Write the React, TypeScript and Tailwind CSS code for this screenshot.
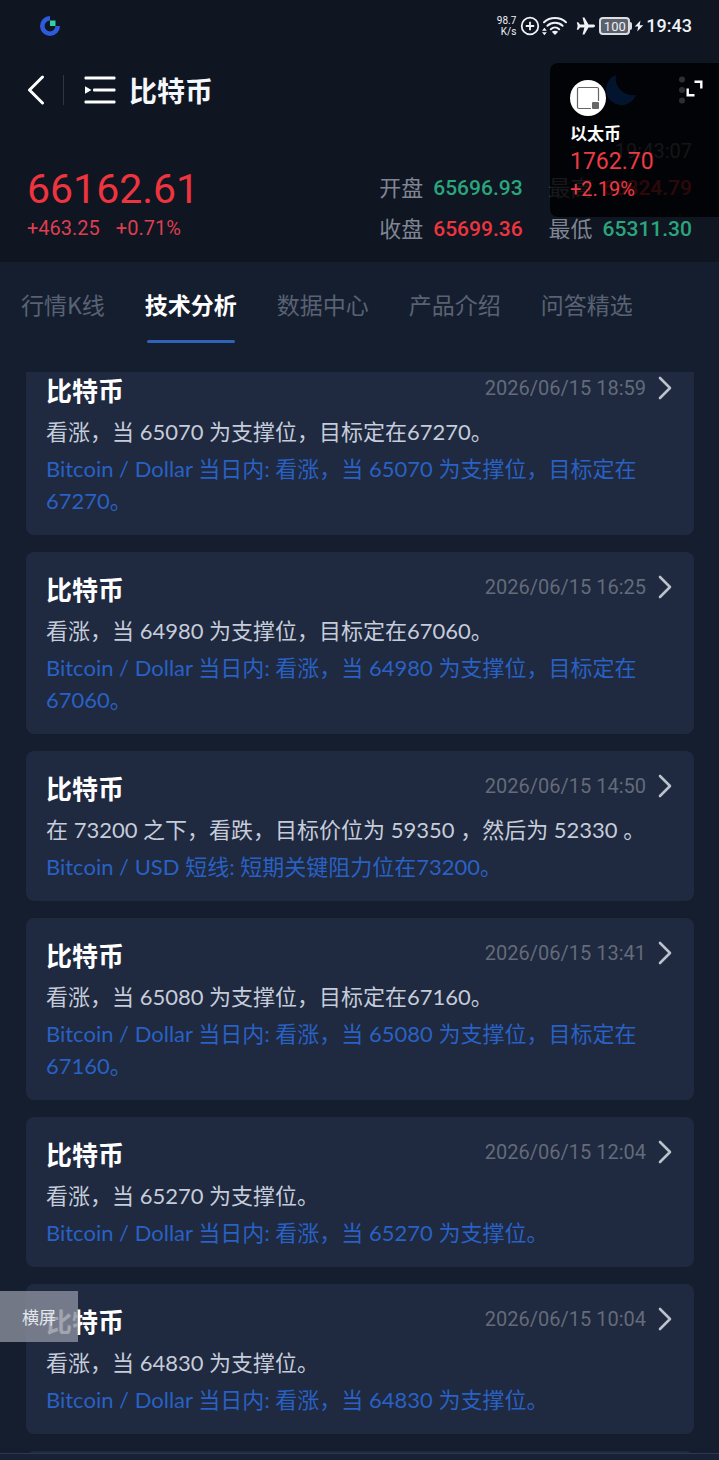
import { Fragment } from "react";

type Signal = {
    time: string;
    summary: string;
    detail: string;
};

const TABS = ["行情K线", "技术分析", "数据中心", "产品介绍", "问答精选"];
const ACTIVE_TAB = "技术分析";

const SIGNALS: Signal[] = [
    {
        time: "2026/06/15 18:59",
        summary: "看涨，当 65070 为支撑位，目标定在67270。",
        detail: "Bitcoin / Dollar 当日内: 看涨，当 65070 为支撑位，目标定在67270。",
    },
    {
        time: "2026/06/15 16:25",
        summary: "看涨，当 64980 为支撑位，目标定在67060。",
        detail: "Bitcoin / Dollar 当日内: 看涨，当 64980 为支撑位，目标定在67060。",
    },
    {
        time: "2026/06/15 14:50",
        summary: "在 73200 之下，看跌，目标价位为 59350 ，然后为 52330 。",
        detail: "Bitcoin / USD 短线: 短期关键阻力位在73200。",
    },
    {
        time: "2026/06/15 13:41",
        summary: "看涨，当 65080 为支撑位，目标定在67160。",
        detail: "Bitcoin / Dollar 当日内: 看涨，当 65080 为支撑位，目标定在67160。",
    },
    {
        time: "2026/06/15 12:04",
        summary: "看涨，当 65270 为支撑位。",
        detail: "Bitcoin / Dollar 当日内: 看涨，当 65270 为支撑位。",
    },
    {
        time: "2026/06/15 10:04",
        summary: "看涨，当 64830 为支撑位。",
        detail: "Bitcoin / Dollar 当日内: 看涨，当 64830 为支撑位。",
    },
];

const QUOTES = [
    { label: "开盘", value: "65696.93", color: "text-[#2aa67c]" },
    { label: "最高", value: "66824.79", color: "text-[#ee343f]" },
    { label: "收盘", value: "65699.36", color: "text-[#ee343f]" },
    { label: "最低", value: "65311.30", color: "text-[#2aa67c]" },
];

// --- Status bar ---

function StatusBar() {
    return (
        <div className="flex h-[52px] items-center justify-between pl-10 pr-[27px] font-['Roboto',sans-serif] text-[#eef1f6]">
            <svg width="20" height="20" viewBox="0 0 20 20" aria-hidden="true">
                <path d="M10 2.3A7.7 7.7 0 1 0 17.7 10" fill="none" stroke="#2e5bdc" strokeWidth="4.6" />
                <rect x="10" y="4.5" width="5.5" height="5.5" fill="#2fd3a0" />
            </svg>
            <div className="flex items-center">
                <div className="text-right text-[10px] leading-[11px]">
                    <div>98.7</div>
                    <div>K/s</div>
                </div>
                <svg className="ml-1" width="20" height="20" viewBox="0 0 20 20" fill="none" stroke="currentColor" strokeWidth="1.8" aria-hidden="true">
                    <circle cx="10" cy="10" r="8.3" />
                    <path d="M10 5.8v8.4M5.8 10h8.4" />
                </svg>
                <svg className="ml-px" width="27" height="20" viewBox="0 0 27 20" aria-hidden="true">
                    <g fill="none" stroke="currentColor" strokeWidth="2" strokeLinecap="round">
                        <path d="M3 6.2C9 .6 19 .6 25 6.2" />
                        <path d="M6.4 9.8c4.2-4 11-4 15.2 0" />
                        <path d="M9.8 13.2c2.4-2.2 6-2.2 8.4 0" />
                    </g>
                    <path d="M10.8 15.8c1.8-1.4 4.6-1.4 6.4 0L14 19z" fill="currentColor" />
                    <path d="M1 14.8L3.4 11.8 5.8 14.8zM1 16.2L3.4 19.2 5.8 16.2z" fill="currentColor" />
                </svg>
                <svg className="ml-2" width="19" height="18" viewBox="0 0 19 18" fill="currentColor" aria-hidden="true">
                    <path d="M19 9c0 .9-.9 1.4-2 1.4h-4.5L8.4 17.5H6.5L8.4 10.4H4L2.3 12.7H.8L1.7 9 .8 5.3h1.5L4 7.6h4.4L6.5.5h1.9l4.1 7.1H17c1.1 0 2 .5 2 1.4z" />
                </svg>
                <div className="ml-1 flex items-center">
                    <div className="flex h-[18px] w-[31px] items-center justify-center rounded border-2 border-[#d9dde4] bg-[#5c616b] text-[13px] leading-none">
                        100
                    </div>
                    <div className="h-2 w-0.5 rounded-r bg-[#d9dde4]" />
                </div>
                <svg className="ml-0.5" width="10" height="12" viewBox="0 0 10 12" fill="currentColor" aria-hidden="true">
                    <path d="M6.5.5L.8 6.6h3.4L3.2 11.5 9.3 5.2H5.7z" />
                </svg>
                <span className="ml-0.5 text-[18px] leading-6 font-medium">19:43</span>
            </div>
        </div>
    );
}

// --- Header ---

function TitleBar() {
    return (
        <div className="flex h-[76px] items-center pl-[26px] pr-[27px]">
            <button type="button" aria-label="返回" className="text-white">
                <svg width="20" height="30" viewBox="0 0 20 30" fill="none" stroke="currentColor" strokeWidth="3" strokeLinecap="round" strokeLinejoin="round">
                    <path d="M16.5 2L3.5 15l13 13" />
                </svg>
            </button>
            <div className="ml-[17px] h-[30px] w-px bg-[#2f3747]" />
            <button type="button" aria-label="切换品种" className="ml-5 text-white">
                <svg width="32" height="28" viewBox="0 0 32 28" fill="currentColor">
                    <rect x="0.5" y="0.5" width="31" height="3" rx="1" />
                    <rect x="9" y="12.5" width="22.5" height="3" rx="1" />
                    <rect x="0.5" y="24.5" width="31" height="3" rx="1" />
                    <path d="M1 10.2v7.6L7.5 14z" />
                </svg>
            </button>
            <h1 className="ml-[13px] text-[28px] leading-10 font-bold text-[#f4f7fc]">比特币</h1>
            <div className="ml-auto flex items-center gap-[42px]">
                <svg width="32" height="32" viewBox="0 0 32 32" fill="#1473ff" aria-hidden="true">
                    <path d="M11 1a15.5 15.5 0 1 0 20 20A17 17 0 0 1 11 1z" />
                </svg>
                <button type="button" aria-label="更多" className="pr-[7px] text-white">
                    <svg width="6" height="28" viewBox="0 0 6 28" fill="currentColor">
                        <circle cx="3" cy="3.5" r="3" />
                        <circle cx="3" cy="14" r="3" />
                        <circle cx="3" cy="24.5" r="3" />
                    </svg>
                </button>
            </div>
        </div>
    );
}

function PriceSummary() {
    return (
        <div className="px-[27px] pb-3 font-['Roboto','Noto_Sans_CJK_SC',sans-serif]">
            <div className="flex h-10 items-center justify-end pt-1.5 text-[20px] text-[#6d7482]">19:43:07</div>
            <div className="flex items-start justify-between">
                <div className="text-[#ee343f]">
                    <div className="text-[41px] leading-[42px]">66162.61</div>
                    <div className="flex gap-4 text-[20px] leading-9 text-[#dd3f50]">
                        <span>+463.25</span>
                        <span>+0.71%</span>
                    </div>
                </div>
                <dl className="grid grid-cols-[auto_auto_auto_auto] text-[22px] leading-[41px]">
                    {QUOTES.map((q, i) => (
                        <Fragment key={q.label}>
                            <dt className={i % 2 ? "ml-[26px] text-[#7f8593]" : "text-[#7f8593]"}>{q.label}</dt>
                            <dd className={`ml-2.5 text-[21px] font-medium ${q.color}`}>{q.value}</dd>
                        </Fragment>
                    ))}
                </dl>
            </div>
        </div>
    );
}

// --- Floating quote window ---

function FloatingQuote() {
    return (
        <aside className="absolute right-0 top-[63px] h-[154px] w-[169px] rounded-l-lg bg-black/82 pl-5 pt-[17px] font-['Roboto','Noto_Sans_CJK_SC',sans-serif]">
            <div className="flex justify-between pr-4">
                <svg width="36" height="36" viewBox="0 0 36 36" aria-hidden="true">
                    <circle cx="18" cy="18" r="18" fill="#fff" />
                    <rect x="7.5" y="7.5" width="21" height="21" rx="1.5" fill="none" stroke="#666" strokeWidth="1.2" />
                    <rect x="21" y="21" width="9" height="9" fill="#fff" />
                    <rect x="22" y="22" width="7" height="7" rx="1" fill="#666" />
                </svg>
                <button type="button" aria-label="展开" className="self-start text-white">
                    <svg width="17" height="17" viewBox="0 0 17 17" fill="none" stroke="currentColor" strokeWidth="2.4">
                        <path d="M8.5 1.7h6.8v6.8M1.7 8.500v6.800h6.800" />
                    </svg>
                </button>
            </div>
            <div className="mt-1 text-[17px] leading-7 font-bold text-white">以太币</div>
            <div className="text-[23px] leading-7 text-[#ee3a45]">1762.70</div>
            <div className="text-[20px] leading-[26px] text-[#ee3a45]">+2.19%</div>
        </aside>
    );
}

// --- Tabs ---

function TabBar() {
    return (
        <nav className="flex gap-10 px-[21px] pt-[25px] pb-[29px] text-[23px] leading-[34px]">
            {TABS.map(tab =>
                tab === ACTIVE_TAB ? (
                    <button key={tab} type="button" aria-current="page" className="flex flex-col items-center font-bold whitespace-nowrap text-white">
                        {tab}
                        <span className="mt-[19px] h-[3px] w-[88px] rounded-full bg-[#2f62b8]" />
                    </button>
                ) : (
                    <button key={tab} type="button" className="self-start whitespace-nowrap text-[#596273]">
                        {tab}
                    </button>
                )
            )}
        </nav>
    );
}

// --- Signal list ---

function SignalCard({ signal, clipped = false }: { signal: Signal; clipped?: boolean }) {
    return (
        <article className={`shrink-0 bg-[#1f293f] px-5 pb-[18px] ${clipped ? "rounded-b-lg pt-[3px]" : "rounded-lg pt-[22px]"}`}>
            <div className="flex items-start justify-between">
                <h2 className="text-[26px] leading-8 font-bold text-white">比特币</h2>
                <a href="#" className="flex items-center gap-3 pr-0.5">
                    <time className="font-['Roboto',sans-serif] text-[20px] leading-[26px] text-[#646b7a]">{signal.time}</time>
                    <svg width="14" height="24" viewBox="0 0 14 24" fill="none" stroke="#bcc2cc" strokeWidth="2.6" strokeLinecap="round" strokeLinejoin="round" aria-hidden="true">
                        <path d="M2 2l10 10L2 22" />
                    </svg>
                </a>
            </div>
            <p className="mt-[9px] text-[22px] leading-8 text-[#c5ccda]">{signal.summary}</p>
            <p className="mt-[5px] text-[22px] leading-8 text-[#2961c4]">{signal.detail}</p>
        </article>
    );
}

export default function App() {
    return (
        <div className="relative flex h-screen flex-col overflow-hidden bg-[#151e2f] font-['Noto_Sans_CJK_SC',sans-serif]">
            <header className="bg-[#0f1521]">
                <StatusBar />
                <TitleBar />
                <PriceSummary />
            </header>
            <TabBar />
            <main className="flex min-h-0 flex-1 flex-col gap-[17px] overflow-hidden pr-[25px] pl-[26px] font-['Lato','Noto_Sans_CJK_SC',sans-serif]">
                {SIGNALS.map((signal, i) => (
                    <SignalCard key={signal.time} signal={signal} clipped={i === 0} />
                ))}
                {/* next page placeholder */}
                <div className="h-[150px] shrink-0 rounded-lg bg-[#1f293f]" />
            </main>
            <footer className="h-[7px] shrink-0 border-t border-[#2b3850] bg-[#182236]" />

            <FloatingQuote />
            <button type="button" className="absolute bottom-[118px] left-0 h-[51px] w-[78px] bg-[#8a8e9c]/80 text-[17px] text-[#e3e6ec]">
                横屏
            </button>
        </div>
    );
}
